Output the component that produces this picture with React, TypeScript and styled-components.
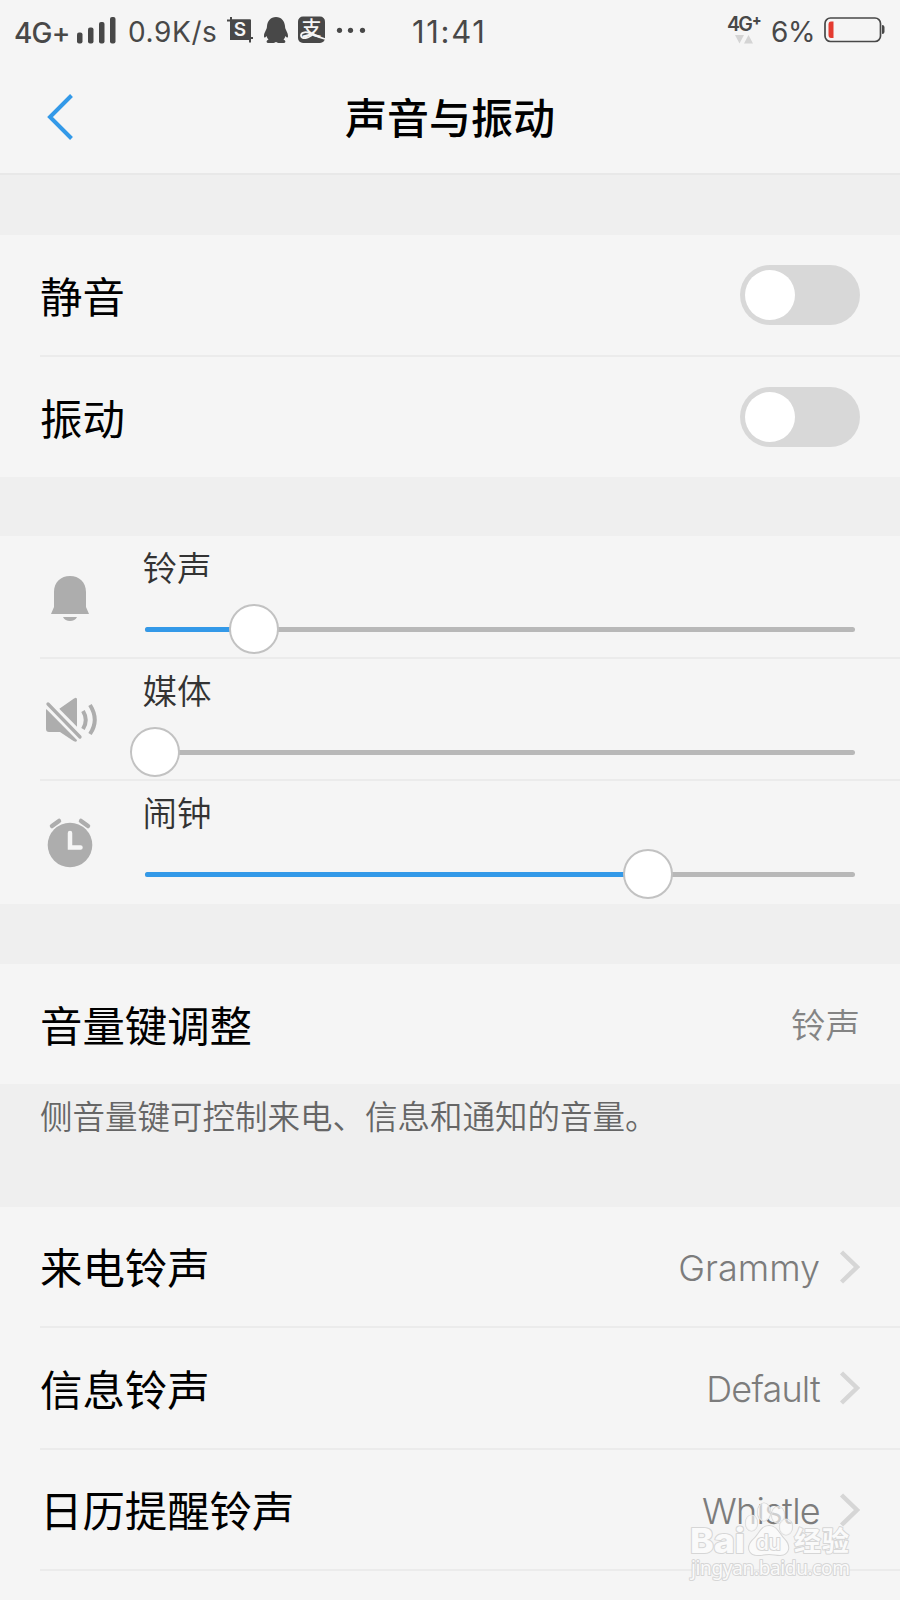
import React from "react";
import styled, { createGlobalStyle } from "styled-components";

const GlobalStyle = createGlobalStyle`
  * { box-sizing: border-box; }
  body {
    margin: 0;
    background: #f5f5f5;
    font-family: Inter, "Noto Sans CJK SC", sans-serif;
    color: #000;
  }
  svg { overflow: visible; flex: none; }
`;

const Screen = styled.main`
  position: relative;
  width: 900px;
  height: 1600px;
  overflow: hidden;
  background: #efefef;
`;

const StatusBar = styled.div`
  display: grid;
  grid-template-columns: 412px 1fr auto;
  height: 60px;
  padding-right: 14px;
  align-items: center;
  background: #f5f5f5;
  color: #484848;
`;

const StatusGroup = styled.div`
  display: flex;
  align-items: center;
  height: 60px;
`;

const StatusText = styled.span<{
  $size: number;
  $width: number;
  $inset?: number;
  $spacing?: number;
  $shift?: number;
  $weight?: number;
}>`
  width: ${(p) => p.$width}px;
  font-size: ${(p) => p.$size}px;
  font-weight: ${(p) => p.$weight ?? 400};
  letter-spacing: ${(p) => p.$spacing ?? 0}px;
  padding: ${(p) => p.$shift ?? 0}px 0 0 ${(p) => p.$inset ?? 0}px;
  line-height: 34px;
  white-space: nowrap;
`;

const NetworkBadge = styled.div`
  display: flex;
  flex-direction: column;
  width: 44px;
  height: 33px;
  font-size: 19.5px;
  line-height: 20px;
  font-weight: 600;
  letter-spacing: -1.8px;
  white-space: nowrap;
`;

const BadgeLine = styled.span`
  display: flex;
  height: 21px;
`;

const BadgePlus = styled.span`
  margin: -4px 0 0 1px;
  font-size: 14px;
  font-weight: 800;
`;

const Arrows = styled.svg`
  margin-top: 0;
`;

const TitleBar = styled.header`
  display: grid;
  grid-template-columns: 120px 1fr 120px;
  align-items: center;
  height: 115px;
  border-bottom: 2px solid #e8e8e8;
  background: #f5f5f5;
`;

const BackButton = styled.button`
  display: flex;
  width: 80px;
  height: 80px;
  margin: 0 0 0 40px;
  padding: 15px 0 0 6px;
  border: 0;
  background: none;
`;

const Title = styled.h1`
  margin: 0;
  padding-top: 5px;
  font-size: 42px;
  line-height: 60px;
  font-weight: 500;
  text-align: center;
`;

const Section = styled.section<{ $top: number }>`
  margin-top: ${(p) => p.$top}px;
  background: #f5f5f5;
`;

const Row = styled.div<{ $height: number; $line?: boolean }>`
  display: flex;
  align-items: center;
  justify-content: space-between;
  height: ${(p) => p.$height}px;
  margin-left: 40px;
  padding-right: 40px;
  border-bottom: ${(p) => (p.$line ? "2px solid #ebebeb" : "0")};
`;

const Label = styled.span`
  padding-top: 5px;
  font-size: 42.4px;
  line-height: 60px;
`;

const Value = styled.span`
  display: flex;
  align-items: center;
  gap: 20px;
  font-size: 36px;
  font-weight: 300;
  line-height: 50px;
  color: #7c7c7c;
`;

const ValueText = styled.span<{ $spacing: number }>`
  padding-top: 2px;
  letter-spacing: ${(p) => p.$spacing}px;
`;

const CjkValue = styled.span`
  padding-top: 3px;
  font-size: 34.5px;
  font-weight: 350;
  line-height: 50px;
  color: #848484;
`;

const Toggle = styled.button`
  display: flex;
  align-items: center;
  width: 120px;
  height: 60px;
  padding: 5px;
  border: 0;
  border-radius: 30px;
  background: #d8d8d8;
`;

const Knob = styled.span`
  width: 50px;
  height: 50px;
  border-radius: 50%;
  background: #fff;
`;

const SliderRow = styled.div<{ $height: number; $line?: boolean }>`
  display: grid;
  grid-template-columns: 103px 1fr;
  height: ${(p) => p.$height}px;
  margin-left: 40px;
  padding-right: 45px;
  border-bottom: ${(p) => (p.$line ? "2px solid #ebebeb" : "0")};
`;

const SliderIcon = styled.div<{ $top: number }>`
  width: 60px;
  height: 60px;
  margin-top: ${(p) => p.$top}px;
`;

const SliderBody = styled.div`
  display: flex;
  flex-direction: column;
`;

const SliderLabel = styled.span`
  height: 50px;
  margin: 7px 0 0 -0.5px;
  font-size: 34.6px;
  font-weight: 350;
  line-height: 50px;
  color: #333;
`;

const Track = styled.div`
  position: relative;
  height: 5px;
  margin: 33.5px 0 0 2px;
  border-radius: 3px;
  background: #b8b8b8;
`;

const Fill = styled.div`
  height: 5px;
  border-radius: 3px;
  background: #3399e8;
`;

const Thumb = styled.span`
  position: absolute;
  top: -23px;
  width: 50px;
  height: 50px;
  margin-left: -25px;
  border: 2px solid #c2c2c2;
  border-radius: 50%;
  background: #fff;
`;

const Note = styled.p`
  margin: 0;
  height: 123px;
  padding: 10px 40px 0;
  font-size: 32.5px;
  font-weight: 350;
  line-height: 48px;
  color: #666;
  white-space: nowrap;
`;

const Watermark = styled.div`
  position: absolute;
  left: 688px;
  top: 1500px;
  width: 170px;
  height: 90px;
`;

const BellIcon = () => (
  <svg width="60" height="60" viewBox="0 0 60 60" fill="#adadad">
    <path d="M14 24C14 14 21 8 30 8s16 6 16 16v15l3 7H11l3-7z" />
    <path d="M23 49h14c-1 2.500-4 4-7 4s-6-1.500-7-4z" />
  </svg>
);

const MutedIcon = () => (
  <svg width="60" height="60" viewBox="0 0 60 60" fill="none">
    <path d="M6 20q0-1 1-1h12L34 8.500q3-2 3 1V50q0 3-3.500 1L20 42H9q-3 0-3-3z" fill="#adadad" />
    <path d="M4 10l38 38.500" stroke="#f5f5f5" strokeWidth="9.500" />
    <path d="M8 14l32 33" stroke="#adadad" strokeWidth="3.300" strokeLinecap="round" />
    <path d="M43 21q5.500 9 0 18M50 15q9.500 15 0 29" stroke="#adadad" strokeWidth="4" />
  </svg>
);

const AlarmIcon = () => (
  <svg width="60" height="60" viewBox="0 0 60 60" fill="none" strokeLinecap="round">
    <circle cx="30" cy="33" r="22.300" fill="#adadad" />
    <path d="M12 14l7-5M41 9l7 5" stroke="#adadad" strokeWidth="4.500" />
    <path d="M30 21v14.500h10.500" stroke="#f5f5f5" strokeWidth="4.500" />
  </svg>
);

const Chevron = () => (
  <svg width="20" height="34" viewBox="0 0 20 34" fill="none">
    <path d="M1.500 2L17 17 1.500 32" stroke="#d6d6d6" strokeWidth="4.500" />
  </svg>
);

const SignalIcon = () => (
  <svg width="40" height="28" viewBox="0 0 40 28" fill="#484848">
    <rect x="0" y="16.500" width="5.500" height="11" rx="2" />
    <rect x="11" y="11.500" width="5.500" height="16" rx="2" />
    <rect x="22" y="6" width="5.500" height="21.500" rx="2" />
    <rect x="33" y="1" width="5.500" height="26.500" rx="2" />
  </svg>
);

const NotificationIcons = () => (
  <svg width="140" height="30" viewBox="0 0 140 30" fill="#484848">
    <path d="M0 5.500h23v22M4 2v21h22" stroke="#484848" strokeWidth="2" fill="none" />
    <rect x="3" y="4.500" width="20" height="20.500" />
    <text x="13" y="21" fill="#f5f5f5" fontFamily="Inter" fontSize="19" fontWeight="600" textAnchor="middle">S</text>
    <path d="M49 2c5.500 0 8.500 4 9 9 0 4 3 6 3 10 0 2-1 2-2.500 0-.5 1.500-1 2.500-2 3.500 2.500 1 2.500 3.500 0 3.500h-5c-1.500 0-1.500-1-2.500-1s-1 1-2.500 1h-5c-2.500 0-2.500-2.500 0-3.500-1-1-1.500-2-2-3.500-1.500 2-2.500 2-2.500 0 0-4 3-6 3-10 .5-5 3.500-9 9-9z" />
    <rect x="71" y="1.500" width="27" height="26.500" rx="5" />
    <text x="84.500" y="20.500" fill="#f5f5f5" fontFamily="Noto Sans CJK SC" fontSize="20" fontWeight="500" textAnchor="middle">支</text>
    <path d="M84 19c-4-3-10-2-10 1.500 0 4 8 3.500 13-2.500M86 19q5 3 12 5" stroke="#f5f5f5" strokeWidth="1.800" fill="none" />
    <circle cx="112.500" cy="15.300" r="2.600" />
    <circle cx="123.500" cy="15.300" r="2.600" />
    <circle cx="135.500" cy="15.300" r="2.600" />
  </svg>
);

const BatteryIcon = () => (
  <svg width="62" height="26" viewBox="0 0 62 26">
    <rect x="1" y="1" width="55.500" height="23.500" rx="5.500" fill="none" stroke="#484848" strokeWidth="1.700" />
    <path d="M58 8q2.500 0 2.500 2v5q0 2-2.500 2z" fill="#484848" />
    <path d="M9.500 4.500v16.500H7q-2.500 0-2.500-3V7.500q0-3 2.500-3z" fill="#e43b30" />
  </svg>
);

const SLIDERS = [
  { name: "铃声", level: 1, icon: <BellIcon />, iconTop: 32, height: 123 },
  { name: "媒体", level: 0, icon: <MutedIcon />, iconTop: 31, height: 122 },
  { name: "闹钟", level: 5, icon: <AlarmIcon />, iconTop: 31, height: 123 },
];

const RINGTONES = [
  { name: "来电铃声", value: "Grammy", spacing: 0, height: 121 },
  { name: "信息铃声", value: "Default", spacing: -0.8, height: 122 },
  { name: "日历提醒铃声", value: "Whistle", spacing: -0.7, height: 121 },
];

const MAX_LEVEL = 7;

export default function App() {
  return (
    <Screen>
      <GlobalStyle />
      <StatusBar>
        <StatusGroup>
          <StatusText $size={28} $width={77} $inset={14} $spacing={-0.8} $shift={5} $weight={500}>4G+</StatusText>
          <SignalIcon />
          <StatusText $size={28} $width={110} $inset={11} $spacing={0.6} $shift={3}>0.9K/s</StatusText>
          <NotificationIcons />
        </StatusGroup>
        <StatusText $size={31} $width={100} $spacing={1.7} $shift={3}>11:41</StatusText>
        <StatusGroup>
          <NetworkBadge>
            <BadgeLine>
              4G<BadgePlus>+</BadgePlus>
            </BadgeLine>
            <Arrows width="26" height="9" viewBox="0 0 26 9" fill="#d4d4d4">
              <path d="M8 0h9l-4.500 8.500zM17 8.500h9L21.500 0z" />
            </Arrows>
          </NetworkBadge>
          <StatusText $size={28} $width={53} $spacing={-0.3} $shift={3}>6%</StatusText>
          <BatteryIcon />
        </StatusGroup>
      </StatusBar>

      <TitleBar>
        <BackButton aria-label="返回">
          <svg width="30" height="50" viewBox="0 0 30 50" fill="none">
            <path d="M25.500 3.500L4 25 25.500 46.500" stroke="#3399e8" strokeWidth="4" />
          </svg>
        </BackButton>
        <Title>声音与振动</Title>
      </TitleBar>

      <Section $top={60}>
        <Row $height={122} $line>
          <Label>静音</Label>
          <Toggle role="switch" aria-checked={false}><Knob /></Toggle>
        </Row>
        <Row $height={120}>
          <Label>振动</Label>
          <Toggle role="switch" aria-checked={false}><Knob /></Toggle>
        </Row>
      </Section>

      <Section $top={59}>
        {SLIDERS.map((s, i) => (
          <SliderRow key={s.name} $height={s.height} $line={i < 2}>
            <SliderIcon $top={s.iconTop}>{s.icon}</SliderIcon>
            <SliderBody>
              <SliderLabel>{s.name}</SliderLabel>
              <Track>
                <Fill style={{ width: `${(s.level / MAX_LEVEL) * 100}%` }} />
                <Thumb style={{ left: 10 + (s.level / MAX_LEVEL) * 690 }} />
              </Track>
            </SliderBody>
          </SliderRow>
        ))}
      </Section>

      <Section $top={60}>
        <Row $height={120}>
          <Label>音量键调整</Label>
          <CjkValue>铃声</CjkValue>
        </Row>
      </Section>
      <Note>侧音量键可控制来电、信息和通知的音量。</Note>

      <Section $top={0}>
        {RINGTONES.map((r) => (
          <Row key={r.name} $height={r.height} $line>
            <Label>{r.name}</Label>
            <Value>
              <ValueText $spacing={r.spacing}>{r.value}</ValueText>
              <Chevron />
            </Value>
          </Row>
        ))}
        <Row $height={40} />
      </Section>

      <Watermark>
        <svg width="170" height="90" viewBox="0 0 170 90" fill="#fafafa" stroke="#d6d6d6" strokeWidth="2" strokeLinejoin="round" paintOrder="stroke">
          <text x="2" y="53" fontFamily="Inter" fontSize="34" fontWeight="800" textLength="55" lengthAdjust="spacingAndGlyphs">Bai</text>
          <g strokeWidth="1.200" fillOpacity="0.65">
            <ellipse cx="63.500" cy="23" rx="6" ry="8" />
            <ellipse cx="76" cy="12" rx="6.500" ry="9" />
            <ellipse cx="90" cy="15" rx="6.500" ry="8.500" />
            <ellipse cx="98" cy="27" rx="6.500" ry="8" />
          </g>
          <path d="M81 26c8 0 10 8 15 13 7 7 5 16-4 16-4 0-7-1-11-1s-7 1-11 1c-9 0-12-8-5-15 6-5 8-14 16-14z" />
          <text x="68" y="50" fontFamily="Inter" fontSize="21" fontWeight="500" textLength="25">du</text>
          <text x="106" y="51" fontFamily="Noto Sans CJK SC" fontSize="27" fontWeight="700" textLength="55">经验</text>
          <text x="3" y="75" fontFamily="Noto Sans" fontSize="19" textLength="159">jingyan.baidu.com</text>
        </svg>
      </Watermark>
    </Screen>
  );
}
